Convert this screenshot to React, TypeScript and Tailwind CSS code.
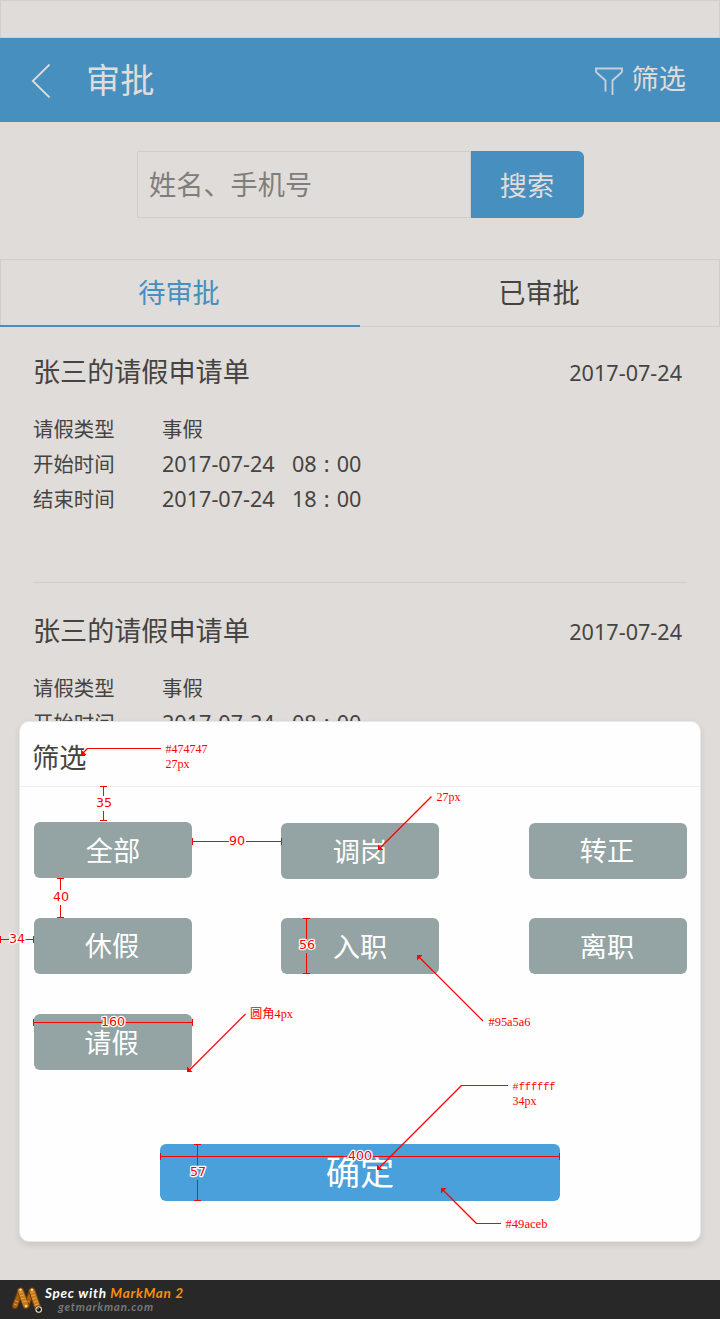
import type { ReactNode } from 'react';

function Colon() {
  return (
    <span lang="zh-CN" className="inline-block w-[20px] text-center font-['Noto_Sans',sans-serif] text-[21.6px]">
      :
    </span>
  );
}

function Row({ label, children }: { label: string; children: ReactNode }) {
  return (
    <div className="flex h-[35px] items-center text-[20.4px] leading-[35px]">
      <span className="w-[129px]">{label}</span>
      <span className="flex items-center whitespace-pre">{children}</span>
    </div>
  );
}

function Stamp({ date, hour }: { date: string; hour: string }) {
  return (
    <span className="flex items-center pb-[2px] text-[21.6px]">
      <span className="w-[130px]">{date}</span>
      <span>{hour}</span>
      <Colon />
      <span>00</span>
    </span>
  );
}

function Request({ className }: { className: string }) {
  return (
    <article className={`mx-[33px] flex flex-col ${className}`}>
      <div className="flex h-10 items-center justify-between pr-[5px]">
        <h2 className="text-[27.1px] leading-10">张三的请假申请单</h2>
        <time className="pt-[2px] text-[21.6px] leading-9">2017-07-24</time>
      </div>
      <div className="mt-5">
        <Row label="请假类型">事假</Row>
        <Row label="开始时间">
          <Stamp date="2017-07-24" hour="08" />
        </Row>
        <Row label="结束时间">
          <Stamp date="2017-07-24" hour="18" />
        </Row>
      </div>
    </article>
  );
}

function FilterButton({ label, className = 'pr-[2px]' }: { label: string; className?: string }) {
  return (
    <button
      className={`flex h-14 w-[158px] items-center justify-center rounded-[6px] bg-[#94a3a3] text-[27.2px] leading-none text-white ${className}`}
    >
      {label}
    </button>
  );
}

function Dim({ x, y, w, children }: { x: number; y: number; w: number; children: string }) {
  return (
    <text
      x={x}
      y={y}
      textLength={w}
      fontFamily="DejaVu Sans"
      fontSize="12.7"
      fill="#f00"
      stroke="#fff"
      strokeWidth="2.6"
      strokeLinejoin="round"
      paintOrder="stroke"
    >
      {children}
    </text>
  );
}

function Note({ x, y, w, mono, children }: { x: number; y: number; w: number; mono?: boolean; children: string }) {
  return (
    <text
      x={x}
      y={y}
      textLength={w}
      lengthAdjust="spacingAndGlyphs"
      fontFamily={mono ? '"Liberation Mono", monospace' : '"Liberation Serif", "Noto Sans CJK SC", serif'}
      fontSize={mono ? 11 : 12}
      fill="#f00"
    >
      {children}
    </text>
  );
}

function Annotations() {
  return (
    <svg className="pointer-events-none absolute left-0 top-0 h-[1280px] w-[720px]" viewBox="0 0 720 1280">
      <g stroke="#f00" fill="none" shapeRendering="crispEdges">
        <path d="M100 786.5h7M103.5 786v10M103.5 811v10M100 820.5h7" />
        <path d="M192.5 838v7M192 841.5h37M246 841.5h35M281.5 838v7" />
        <path d="M57 878.5h7M60.5 878v12M60.5 905v12M57 917.5h7" />
        <path d="M.5 936v7M0 939.5h9M25 939.5h9M33.5 936v7" />
        <path d="M303 918.5h7M306.5 918v21M306.5 953v20M303 973.5h7" />
        <path d="M33.5 1019v7M33 1022.5h69M125 1022.5h68M192.5 1019v7" />
        <path d="M160.5 1153v7M160 1156.5h187M373 1156.5h187M559.5 1153v7" />
        <path d="M194 1144.5h7M197.5 1144v21M197.5 1180v20M194 1200.5h7" />
        <path d="M87 748.5h74M461 1085.5h47M476 1223.5h25" />
      </g>
      <g stroke="#f00" strokeWidth="1.2" fill="none">
        <path d="M87.5 748.5L83 753" />
        <path d="M431.5 796.5L379 849" />
        <path d="M483 1021L418 956" />
        <path d="M245.5 1014L188.500 1071" />
        <path d="M461.5 1085.5L379 1168" />
        <path d="M476.5 1223.5L442 1189" />
      </g>
      <g fill="#f00">
        <path d="M81 749.500v5.500h5.500z" />
        <path d="M378 844.500v5.500h5.500z" />
        <path d="M417 955h5.500l-5.500 5.500z" />
        <path d="M187 1066.500v5.500h5.500z" />
        <path d="M377 1164.500v5.500h5.500z" />
        <path d="M441 1188h5.500l-5.500 5.500z" />
      </g>
      <Dim x={96} y={807} w={16}>35</Dim>
      <Dim x={229} y={845} w={16}>90</Dim>
      <Dim x={53} y={901} w={16}>40</Dim>
      <Dim x={9} y={943} w={16}>34</Dim>
      <Dim x={299} y={949} w={16}>56</Dim>
      <Dim x={101} y={1026} w={24}>160</Dim>
      <Dim x={348} y={1160} w={24}>400</Dim>
      <Dim x={190} y={1176} w={16}>57</Dim>
      <Note x={165.5} y={753} w={42}>#474747</Note>
      <Note x={165.5} y={768} w={24}>27px</Note>
      <Note x={436.5} y={801} w={24}>27px</Note>
      <Note x={488.5} y={1026} w={42}>#95a5a6</Note>
      <Note x={250} y={1018} w={43}>圆角4px</Note>
      <Note x={512.5} y={1090} w={43} mono>#ffffff</Note>
      <Note x={512.5} y={1105} w={24}>34px</Note>
      <Note x={505.5} y={1228} w={42}>#49aceb</Note>
    </svg>
  );
}

function MarkManLogo() {
  return (
    <svg className="h-[32px] w-[34px]" viewBox="11 1284 34 32" fill="none" strokeLinejoin="round" strokeLinecap="round">
      <path d="M15 1306L20.5 1291" stroke="#7a4108" strokeWidth="6" />
      <path d="M26.5 1305L32 1291" stroke="#7a4108" strokeWidth="6" />
      <path d="M15 1306L20.5 1291M26.5 1305L32 1291" stroke="#a8620f" strokeWidth="4" />
      <path d="M20.5 1291L26 1305.5M32 1291L38.5 1309.5" stroke="#7a4108" strokeWidth="7" />
      <path d="M20.5 1291L26 1305.5M32 1291L38.5 1309.5" stroke="#c67c1b" strokeWidth="5" />
      <path
        d="M19 1293l3.500-1M20 1296l3.500-1M21 1299l3.500-1M22.500 1302l3.500-1M30.500 1293l3.500-1M31.500 1296l3.500-1M32.500 1299l3.500-1M34 1302l3.500-1M35 1305l3.500-1M15 1301l3 1M14 1304l3 1M27 1301l2 1"
        stroke="#edb661"
        strokeWidth="0.7"
      />
      <circle cx="20.5" cy="1289.7" r="1.2" fill="#f7d9a0" />
      <circle cx="32" cy="1289.7" r="1.2" fill="#f7d9a0" />
      <circle cx="26" cy="1306" r="1.2" fill="#f7d9a0" />
      <circle cx="38.7" cy="1309.5" r="4" fill="#4a2a0c" />
      <circle cx="38.7" cy="1309.5" r="3.2" fill="#f4f1ea" />
      <circle cx="38.7" cy="1309.5" r="2.2" fill="#16120e" />
      <circle cx="38" cy="1308.8" r="0.6" fill="#fff" />
    </svg>
  );
}

export default function App() {
  return (
    <div
      lang="zh-CN"
      className="relative flex h-[1319px] w-[720px] flex-col overflow-hidden bg-[#e0dcd9] font-['Noto_Sans','Noto_Sans_CJK_SC',sans-serif] text-[#454442]"
    >
      <div className="h-[38px] shrink-0 border border-[#d3d0cc]" />

      <header className="flex h-[84px] shrink-0 items-center bg-[#468fbf] text-[#e0dcd9]">
        <svg className="ml-[31px] mt-[2px] h-[34px] w-5" viewBox="0 0 20 34" fill="none" stroke="currentColor" strokeWidth="1.8">
          <path d="M18.500 .5L1.800 17l16.700 16.500" />
        </svg>
        <h1 className="ml-[35px] text-[34.2px] leading-[84px]">审批</h1>
        <button className="ml-auto mr-[34px] flex items-center pb-[2px]">
          <svg className="mr-[9px] mt-[3px] h-7 w-7" viewBox="0 0 28 28" fill="none" stroke="#c6d0da" strokeWidth="1.9">
            <path d="M10.500 24.500V13.500L1.600 5.500Q1 5 1 4V1.500H27V4q0 1-.6 1.500L17.500 13.500V28" />
          </svg>
          <span className="text-[27.2px] leading-10">筛选</span>
        </button>
      </header>

      <div className="ml-[137px] mt-[29px] flex h-[67px] w-[447px] shrink-0">
        <div className="flex w-[334px] items-center border border-[#d1ceca] pl-[11px] pt-[2px] text-[27.2px] text-[#807e7c]">
          姓名、手机号
        </div>
        <button className="flex flex-1 items-center justify-center rounded-r-[6px] bg-[#468fbf] pr-px pt-[3px] text-[27.2px] text-[#e0dcd9]">
          搜索
        </button>
      </div>

      <nav className="mt-[41px] flex h-[68px] shrink-0 border border-[#d1ceca] border-b-0 text-[27.2px]">
        <div className="-ml-px flex w-[360px] items-center justify-center border-b-2 border-[#468fbf] pr-[2px] pt-[2px] text-[#468fbf]">
          待审批
        </div>
        <div className="flex flex-1 items-center justify-center border-b border-[#d1ceca] pr-px pt-px">已审批</div>
      </nav>

      <main className="flex h-[953px] shrink-0 flex-col overflow-hidden">
        <Request className="h-[256px] shrink-0 border-b border-[#d1ceca] pt-[25px]" />
        <Request className="pt-[27.5px]" />
      </main>

      <section className="absolute left-[19px] top-[721px] flex h-[521px] w-[682px] flex-col rounded-[10px] border border-[#e9e9e9] bg-[#fefefe] shadow-[0_3px_7px_rgba(0,0,0,0.1)]">
        <h2 className="h-[65px] shrink-0 border-b border-[#ededed] pl-3 text-[27.2px] leading-[71px]">筛选</h2>
        <div className="mt-9 grid grid-cols-[247px_248px_158px] gap-y-[39px] pl-[14px]">
          <FilterButton label="全部" className="-mt-px pt-px" />
          <FilterButton label="调岗" className="pt-px" />
          <FilterButton label="转正" />
          <FilterButton label="休假" />
          <FilterButton label="入职" className="pt-px" />
          <FilterButton label="离职" className="pr-[2px] pt-px" />
          <FilterButton label="请假" className="mt-px pr-[3px] pt-[2px]" />
        </div>
        <button className="mt-[74px] flex h-[57px] w-[400px] items-center justify-center self-center rounded-[6px] bg-[#4aa0da] text-[34.2px] leading-none text-white">
          确定
        </button>
      </section>

      <Annotations />

      <footer className="flex h-[39px] shrink-0 items-start bg-[#282828] pl-[11px] pt-1 font-['Lato',sans-serif] font-bold italic">
        <MarkManLogo />
        <div className="flex flex-col">
          <p className="whitespace-nowrap text-[13.5px] leading-[19px] tracking-[0.72px] text-white">
            Spec with <span className="text-[#f78f08]">MarkMan 2</span>
          </p>
          <p className="-mt-[4px] pl-[13px] text-[11.5px] leading-[15px] tracking-[0.8px] text-[#777]">getmarkman.com</p>
        </div>
      </footer>
    </div>
  );
}
